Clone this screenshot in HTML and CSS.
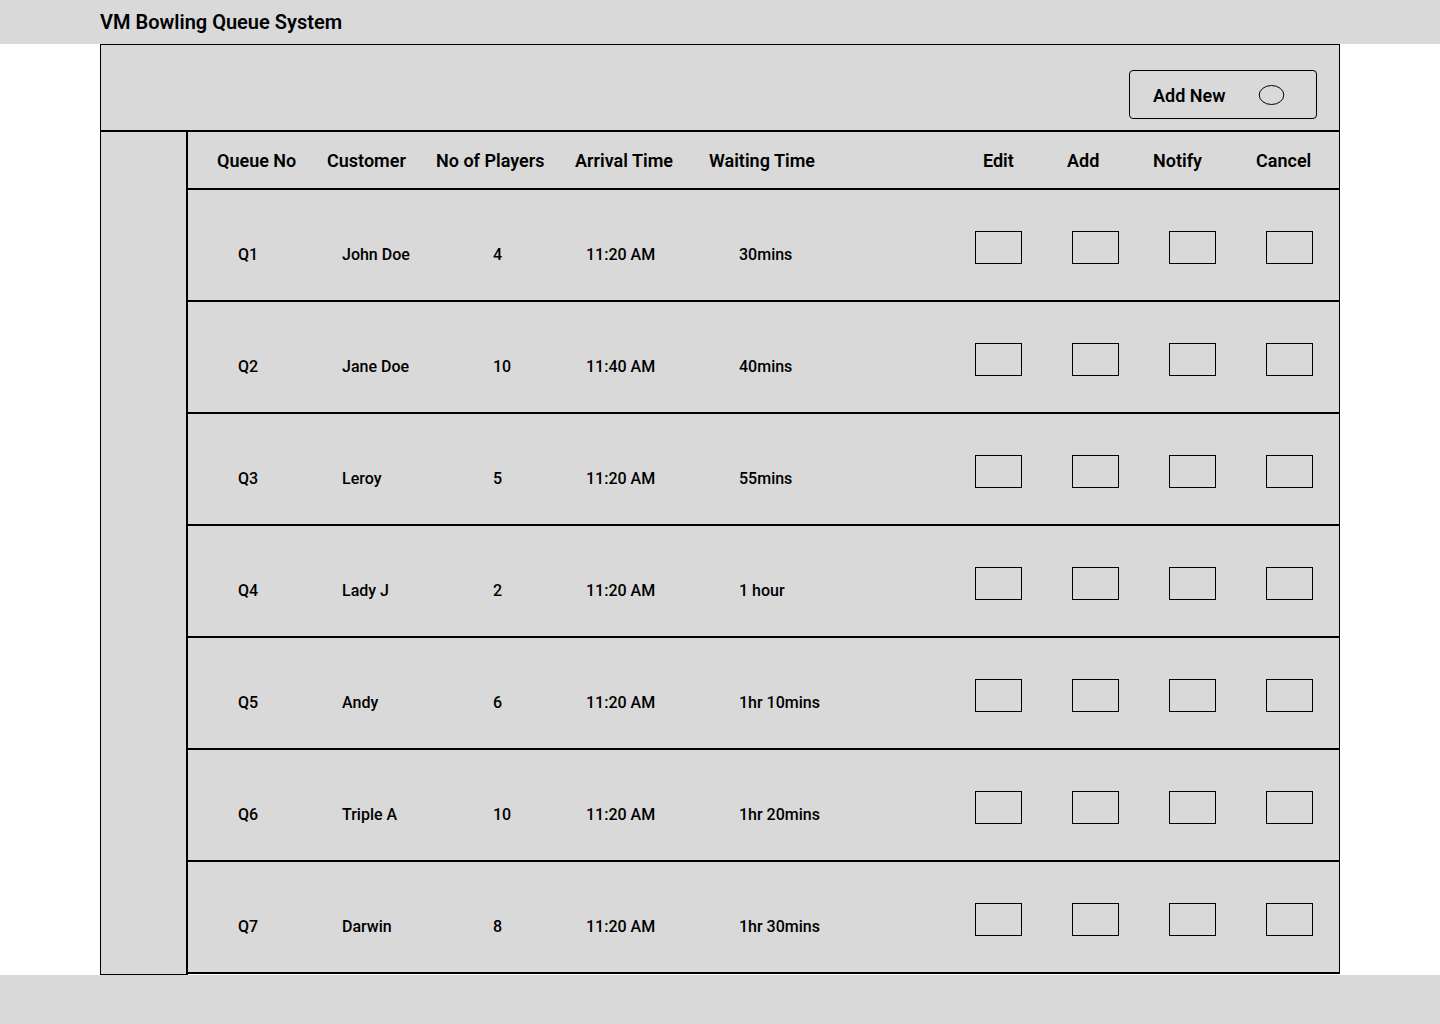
FILE: index.html
```html
<!DOCTYPE html>
<html lang="en">
<head>
<meta charset="utf-8">
<title>VM Bowling Queue System</title>
<link rel="stylesheet" href="styles.css">
</head>
<body>
<header class="topbar">
  <h1 class="title">VM Bowling Queue System</h1>
</header>
<main class="main">
  <div class="frame">
    <div class="toolbar">
      <button class="add-btn" type="button">
        <span>Add New</span>
        <svg class="add-icon" width="27" height="22" viewBox="0 0 27 22" aria-hidden="true"><ellipse cx="13.5" cy="11" rx="12.3" ry="9.5" fill="none" stroke="#000" stroke-width="1"/></svg>
      </button>
    </div>
    <div class="content">
      <aside class="sidebar"></aside>
      <section class="table">
        <div class="thead">
          <div>Queue No</div><div>Customer</div><div>No of Players</div><div>Arrival Time</div><div>Waiting Time</div><div>Edit</div><div>Add</div><div>Notify</div><div>Cancel</div>
        </div>
        <div class="row">
          <div class="cell">Q1</div><div class="cell">John Doe</div><div class="cell">4</div><div class="cell">11:20 AM</div><div class="cell">30mins</div>
          <div class="box"></div><div class="box"></div><div class="box"></div><div class="box"></div>
        </div>
        <div class="row">
          <div class="cell">Q2</div><div class="cell">Jane Doe</div><div class="cell">10</div><div class="cell">11:40 AM</div><div class="cell">40mins</div>
          <div class="box"></div><div class="box"></div><div class="box"></div><div class="box"></div>
        </div>
        <div class="row">
          <div class="cell">Q3</div><div class="cell">Leroy</div><div class="cell">5</div><div class="cell">11:20 AM</div><div class="cell">55mins</div>
          <div class="box"></div><div class="box"></div><div class="box"></div><div class="box"></div>
        </div>
        <div class="row">
          <div class="cell">Q4</div><div class="cell">Lady J</div><div class="cell">2</div><div class="cell">11:20 AM</div><div class="cell">1 hour</div>
          <div class="box"></div><div class="box"></div><div class="box"></div><div class="box"></div>
        </div>
        <div class="row">
          <div class="cell">Q5</div><div class="cell">Andy</div><div class="cell">6</div><div class="cell">11:20 AM</div><div class="cell">1hr 10mins</div>
          <div class="box"></div><div class="box"></div><div class="box"></div><div class="box"></div>
        </div>
        <div class="row">
          <div class="cell">Q6</div><div class="cell">Triple A</div><div class="cell">10</div><div class="cell">11:20 AM</div><div class="cell">1hr 20mins</div>
          <div class="box"></div><div class="box"></div><div class="box"></div><div class="box"></div>
        </div>
        <div class="row">
          <div class="cell">Q7</div><div class="cell">Darwin</div><div class="cell">8</div><div class="cell">11:20 AM</div><div class="cell">1hr 30mins</div>
          <div class="box"></div><div class="box"></div><div class="box"></div><div class="box"></div>
        </div>
      </section>
    </div>
  </div>
</main>
<footer class="footer"></footer>
</body>
</html>
```

FILE: styles.css
```css
* { box-sizing: border-box; }

html, body {
  margin: 0;
  padding: 0;
  background: #ffffff;
  color: #000;
  font-family: Roboto, "Liberation Sans", Arial, sans-serif;
}

.topbar {
  height: 44px;
  background: #d9d9d9;
  padding-left: 100px;
  display: flex;
  align-items: flex-start;
}

.title {
  margin: 10px 0 0 0;
  font-size: 20px;
  line-height: 24px;
  font-weight: 600;
}

.main {
  padding-left: 100px;
  background: #fff;
}

.frame {
  width: 1240px;
  border-top: 1px solid #000;
  border-left: 1px solid #000;
}

.toolbar {
  height: 87px;
  border-bottom: 2px solid #000;
  border-right: 1px solid #000;
  background: #d9d9d9;
  display: flex;
  justify-content: flex-end;
  align-items: flex-start;
  padding: 25px 22px 0 0;
}

.add-btn {
  width: 188px;
  height: 49px;
  border: 1px solid #000;
  border-radius: 4px;
  background: #d9d9d9;
  display: flex;
  align-items: center;
  padding: 2px 0 0 23px;
  font-family: inherit;
  font-size: 18px;
  font-weight: 600;
  color: #000;
  cursor: pointer;
}

.add-icon {
  margin-left: 33px;
  margin-top: -1px;
}

.content {
  display: flex;
  align-items: stretch;
  background: #fff;
}

.sidebar {
  width: 88px;
  flex: none;
  margin-left: -1px;
  border-left: 1px solid #000;
  border-right: 2px solid #000;
  border-bottom: 1px solid #000;
  background: #d9d9d9;
}

.table {
  flex: 1;
  margin-bottom: 1px;
  border-right: 1px solid #000;
  background: #d9d9d9;
}

.thead {
  height: 58px;
  border-bottom: 2px solid #000;
  display: grid;
  grid-template-columns: 110px 109px 139px 134px 274px 84px 86px 103px auto;
  align-items: center;
  padding-left: 29px;
  font-size: 18px;
  line-height: 21px;
  font-weight: 600;
}

.row {
  height: 112px;
  border-bottom: 2px solid #000;
  display: grid;
  grid-template-columns: 104px 151px 93px 153px 236px 47px 97px 97px 97px;
  align-items: start;
  padding-left: 50px;
  font-size: 16px;
  line-height: 19px;
  font-weight: 500;
}

.cell {
  margin-top: 55px;
  white-space: nowrap;
}

.box {
  width: 47px;
  height: 33px;
  margin-top: 41px;
  border: 1px solid #000;
}

.row .box + .box {
  margin-left: 50px;
}

.footer {
  height: 49px;
  background: #d9d9d9;
}
```
